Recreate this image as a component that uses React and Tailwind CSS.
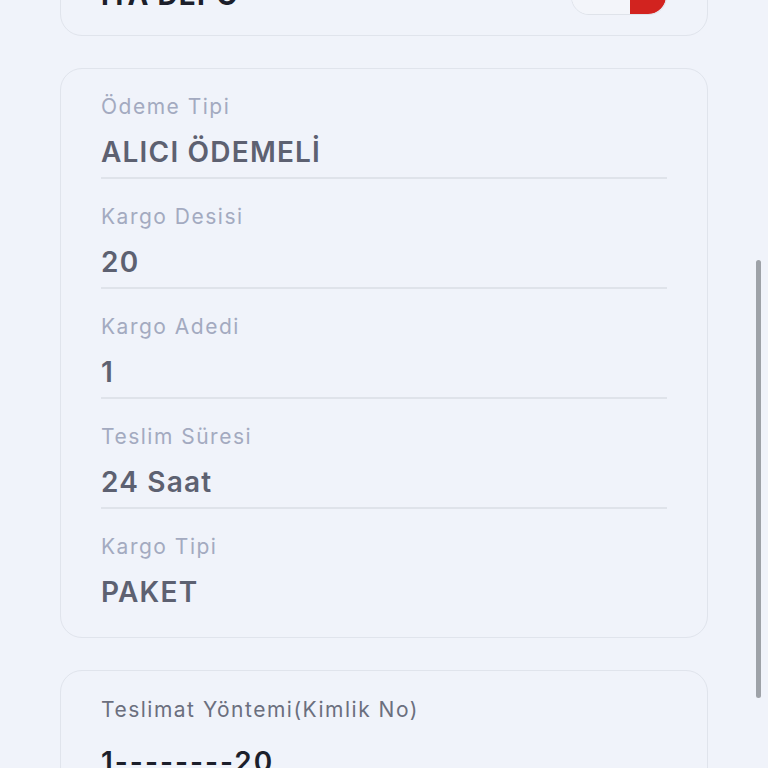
const rows = [
  { label: "Ödeme Tipi", value: "ALICI ÖDEMELİ" },
  { label: "Kargo Desisi", value: "20" },
  { label: "Kargo Adedi", value: "1" },
  { label: "Teslim Süresi", value: "24 Saat" },
  { label: "Kargo Tipi", value: "PAKET" },
];

function InfoRow({ label, value, last }) {
  return (
    <div className={last ? "" : "mb-[23px]"}>
      <div className="text-[21px] leading-[30px] tracking-[1.5px] text-[#a3aac0]">{label}</div>
      <div className="mt-[10px] text-[28px] leading-[40px] font-semibold tracking-[1.2px] text-[#5d6171]">{value}</div>
      {!last && <div className="mt-[5px] h-[2px] bg-[#dfe3ea]" />}
    </div>
  );
}

export default function App() {
  return (
    <div
      className="relative h-[768px] w-[768px] overflow-hidden bg-[#f0f3fa]"
      style={{ fontFamily: "Inter, 'Noto Sans', sans-serif" }}
    >
      <div className="flex flex-col gap-[32px] px-[60px]">
        {/* top card, mostly scrolled away */}
        <div className="mt-[-64px] flex h-[100px] items-start justify-between rounded-[22px] border border-[#e0e4ec] bg-[#f0f3fa] px-[40px]">
          <div className="mt-[38px] text-[28px] leading-[40px] font-bold tracking-[1.2px] text-[#1c1f2b]">İTA DEPO</div>
          <div className="mt-[37px] flex h-[41px] w-[96px] overflow-hidden rounded-[18px] border border-[#dfe3ea]">
            <div className="flex-1 bg-[#f3f5fa]" />
            <div className="w-[36px] rounded-br-[18px] bg-[#d2231f]" />
          </div>
        </div>

        <div className="rounded-[22px] border border-[#e0e4ec] px-[40px] pb-[25px] pt-[23px]">
          {rows.map((r, i) => (
            <InfoRow key={r.label} label={r.label} value={r.value} last={i === rows.length - 1} />
          ))}
        </div>

        <div className="rounded-[22px] border border-[#e0e4ec] px-[40px] pb-[25px] pt-[24px]">
          <div className="text-[21px] leading-[30px] tracking-[1.5px] text-[#6b6f7e]">Teslimat Yöntemi(Kimlik No)</div>
          <div className="mt-[17px] text-[28px] leading-[40px] font-semibold tracking-[2px] text-[#1c1f2b]">1--------20</div>
        </div>
      </div>

      <div className="absolute right-[7px] top-[260px] h-[438px] w-[5px] rounded-full bg-[#9ea2a8]" />
    </div>
  );
}
